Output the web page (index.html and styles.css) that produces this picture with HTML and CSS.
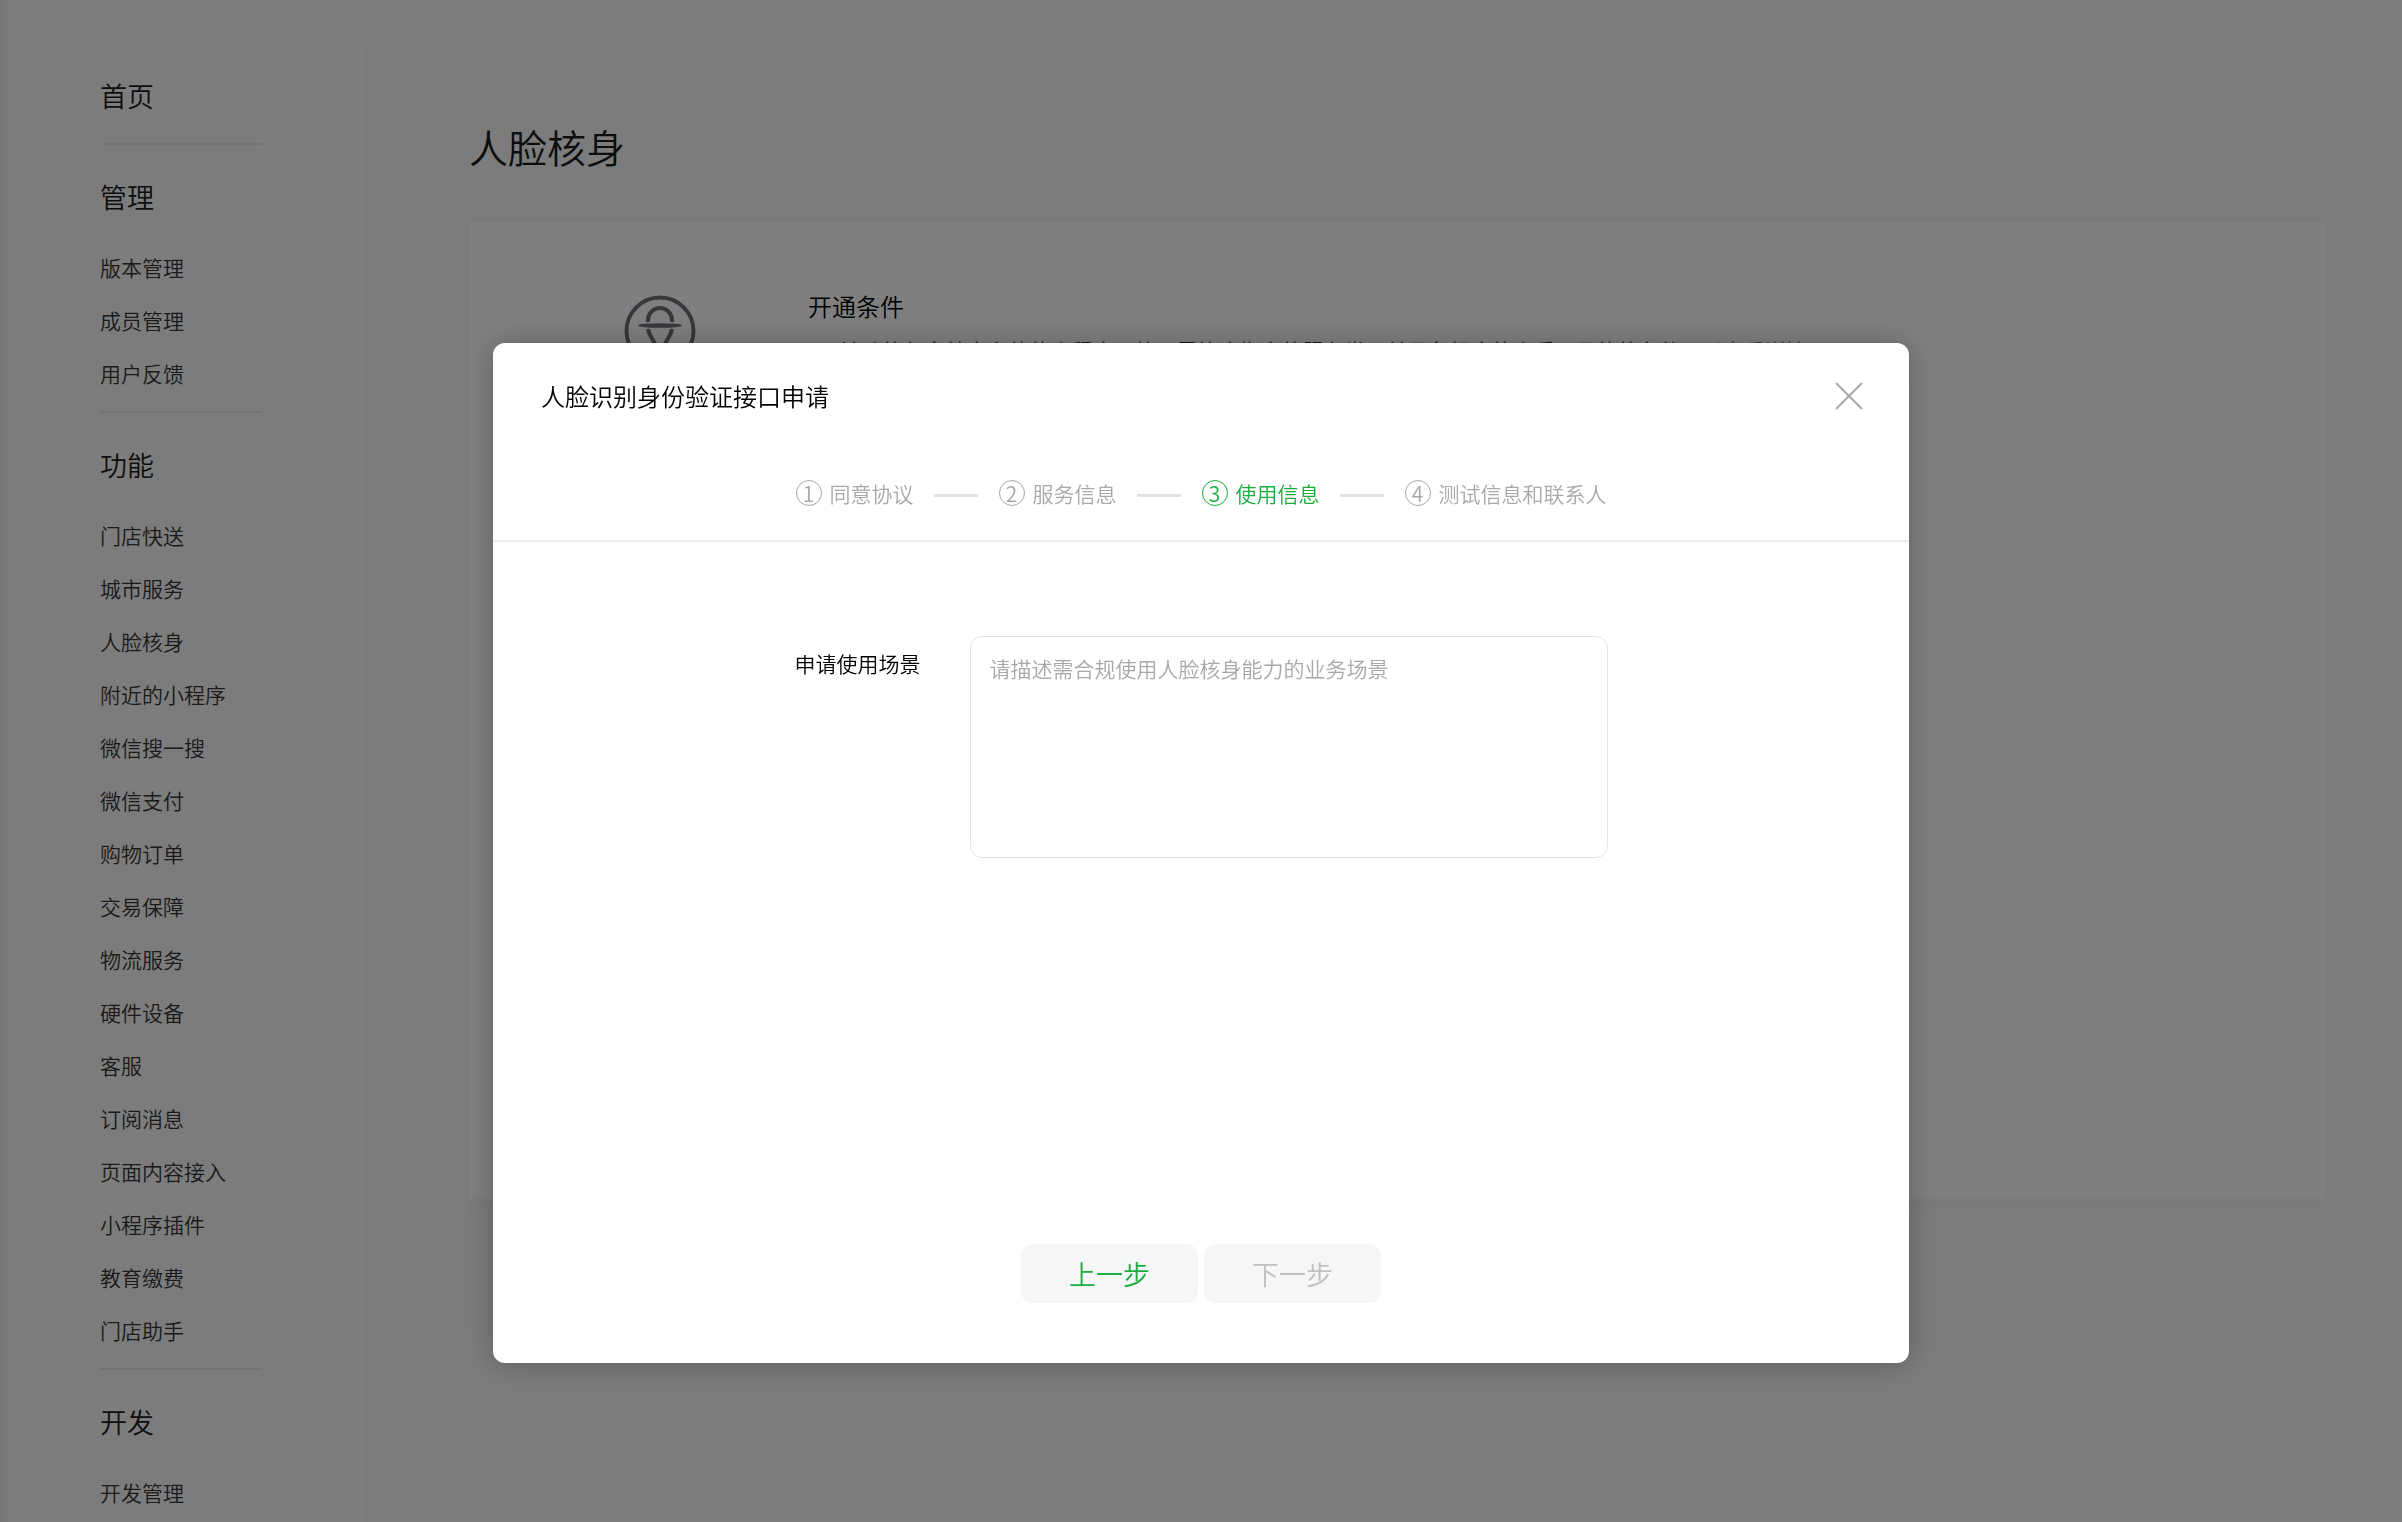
FILE: index.html
```html
<!DOCTYPE html>
<html lang="zh-CN">

<head>
    <meta charset="utf-8">
    <meta name="viewport" content="width=device-width, initial-scale=1.0">
    <title>人脸核身</title>
    <link rel="stylesheet" href="styles.css">
</head>

<body>
    <div class="page">
        <nav class="menu">
            <div class="menu_group">
                <h2><a href="#">首页</a></h2>
            </div>
            <div class="menu_group">
                <h2>管理</h2>
                <ul>
                    <li><a href="#">版本管理</a></li>
                    <li><a href="#">成员管理</a></li>
                    <li><a href="#">用户反馈</a></li>
                </ul>
            </div>
            <div class="menu_group">
                <h2>功能</h2>
                <ul>
                    <li><a href="#">门店快送</a></li>
                    <li><a href="#">城市服务</a></li>
                    <li><a href="#">人脸核身</a></li>
                    <li><a href="#">附近的小程序</a></li>
                    <li><a href="#">微信搜一搜</a></li>
                    <li><a href="#">微信支付</a></li>
                    <li><a href="#">购物订单</a></li>
                    <li><a href="#">交易保障</a></li>
                    <li><a href="#">物流服务</a></li>
                    <li><a href="#">硬件设备</a></li>
                    <li><a href="#">客服</a></li>
                    <li><a href="#">订阅消息</a></li>
                    <li><a href="#">页面内容接入</a></li>
                    <li><a href="#">小程序插件</a></li>
                    <li><a href="#">教育缴费</a></li>
                    <li><a href="#">门店助手</a></li>
                </ul>
            </div>
            <div class="menu_group">
                <h2>开发</h2>
                <ul>
                    <li><a href="#">开发管理</a></li>
                </ul>
            </div>
        </nav>

        <main class="main">
            <h1>人脸核身</h1>
            <section class="card">
                <svg class="card_icon" viewBox="0 0 72 74" fill="none" stroke="#6f7078" stroke-width="4">
                    <circle cx="36" cy="37" r="33.5" />
                    <path d="M24 28v-2a12 12 0 0 1 24 0v2" />
                    <path d="M24 35c1 6 5 11 9 18h6c4-7 8-12 9-18" />
                    <ellipse cx="36" cy="31.5" rx="22" ry="2.3" fill="#6f7078" stroke="none" />
                </svg>
                <div class="card_text">
                    <h3>开通条件</h3>
                    <p>1、该功能仅向特定主体的小程序开放，需符合指定的服务类目并具备相应的资质，具体的条件可以<a href="#">查看详情</a></p>
                </div>
            </section>
        </main>
    </div>

    <div class="mask">
        <div class="dialog" role="dialog" aria-labelledby="dialog_title">
            <div class="dialog_head">
                <h3 id="dialog_title">人脸识别身份验证接口申请</h3>
                <button class="close" type="button" aria-label="关闭">
                    <svg viewBox="0 0 28 28" fill="none" stroke="#a8a8a8" stroke-width="2">
                        <path d="M1 1l26 26M27 1L1 27" />
                    </svg>
                </button>
            </div>

            <ol class="steps">
                <li><span class="num">1</span>同意协议</li>
                <li><span class="num">2</span>服务信息</li>
                <li class="current"><span class="num">3</span>使用信息</li>
                <li><span class="num">4</span>测试信息和联系人</li>
            </ol>

            <form class="form">
                <div class="field">
                    <label for="scene">申请使用场景</label>
                    <textarea id="scene" placeholder="请描述需合规使用人脸核身能力的业务场景"></textarea>
                </div>
                <div class="btns">
                    <button class="btn" type="button">上一步</button>
                    <button class="btn" type="submit" disabled>下一步</button>
                </div>
            </form>
        </div>
    </div>
</body>

</html>
```

FILE: styles.css
```css
* {
    margin: 0;
    padding: 0;
    box-sizing: border-box;
}

body {
    height: 100vh;
    overflow: hidden;
    background-color: #f8f8f8;
    color: #1a1a1a;
    font-family: "Noto Sans CJK SC", sans-serif;
    font-size: 21px;
    font-weight: 350;
}

h1,
h2,
h3 {
    font-weight: 350;
}

ul,
ol {
    list-style: none;
}

a {
    color: inherit;
    text-decoration: none;
}

.page {
    display: flex;
    height: 100vh;
    padding-top: 44px;
    box-shadow: inset 12px 0 12px -12px rgba(0, 0, 0, .12);
}

/* 左侧菜单 */
.menu {
    width: 367px;
    flex-shrink: 0;
    padding: 0 104px 0 100px;
    border-right: 1px solid #ebebee;
    overflow: hidden;
}

.menu_group {
    padding: 32px 0 11px;
    border-bottom: 2px solid #e9e9ec;
}

.menu_group:first-child {
    padding-bottom: 27px;
}

.menu_group:last-child {
    border-bottom: none;
}

.menu_group h2 {
    font-size: 27px;
    line-height: 40px;
}

.menu_group ul {
    padding-top: 24px;
}

.menu_group li {
    line-height: 53px;
    white-space: nowrap;
    color: #353535;
}

/* 右侧内容 */
.main {
    flex: 1;
    padding: 74px 77px 0 102px;
}

.main h1 {
    font-size: 39px;
    line-height: 56px;
}

.card {
    display: flex;
    gap: 112px;
    min-height: 977px;
    margin-top: 48px;
    padding: 72px 155px;
    background: #fff;
    border-radius: 3px;
    box-shadow: 0 2px 14px rgba(110, 130, 160, .05);
}

.card_icon {
    width: 72px;
    height: 74px;
}

.card_text h3 {
    font-size: 24px;
    line-height: 24px;
    color: #000;
}

.card_text p {
    margin-top: 16px;
    line-height: 32px;
    color: #353535;
}

.card_text p a {
    color: #576b95;
}

/* 弹窗 */
.mask {
    position: fixed;
    inset: 0;
    display: flex;
    justify-content: center;
    align-items: flex-start;
    padding-top: 343px;
    background: rgba(0, 0, 0, .5);
}

.dialog {
    width: 60%;
    min-width: 1000px;
    max-width: 1416px;
    background: #fff;
    border-radius: 12px;
    box-shadow: 0 1px 30px rgba(0, 0, 0, .25);
}

.dialog_head {
    display: flex;
    justify-content: space-between;
    align-items: center;
    padding: 35px 46px 37px 48px;
}

.dialog_head h3 {
    font-size: 24px;
    line-height: 36px;
    color: #000;
}

.close {
    width: 28px;
    height: 28px;
    border: none;
    background: none;
}

.close svg {
    display: block;
}

.steps {
    display: flex;
    justify-content: center;
    padding: 27px 0 32px;
    border-bottom: 2px solid #ededed;
    color: #a8a8a8;
}

.steps li {
    display: flex;
    align-items: center;
    line-height: 30px;
}

.steps li + li::before {
    content: "";
    width: 44px;
    height: 3px;
    margin: 4px 21px 0 20px;
    background: #e0e2e1;
}

.steps .num {
    width: 26px;
    height: 26px;
    margin-right: 8px;
    border: 1px solid #a8a8a8;
    border-radius: 50%;
    line-height: 24px;
    text-align: center;
}

.steps .current {
    color: #1aad3d;
}

.steps .current .num {
    border-color: #1aad3d;
}

.field {
    display: flex;
    justify-content: center;
    gap: 50px;
    padding-top: 94px;
}

.field label {
    line-height: 54px;
    color: #000;
}

.field textarea {
    width: 45%;
    height: 222px;
    padding: 15px 18px;
    border: 1px solid #e4e4e4;
    border-radius: 12px;
    font: inherit;
    line-height: 32px;
    resize: none;
}

.field textarea::placeholder {
    color: #a8a8a8;
}

.btns {
    display: flex;
    justify-content: center;
    gap: 6px;
    padding: 386px 0 60px;
}

.btn {
    width: 177px;
    height: 59px;
    border: none;
    border-radius: 12px;
    background: #f5f6f8;
    color: #1aad3d;
    font: inherit;
    font-size: 27px;
}

.btn:disabled {
    color: #c0c0c0;
}
```
